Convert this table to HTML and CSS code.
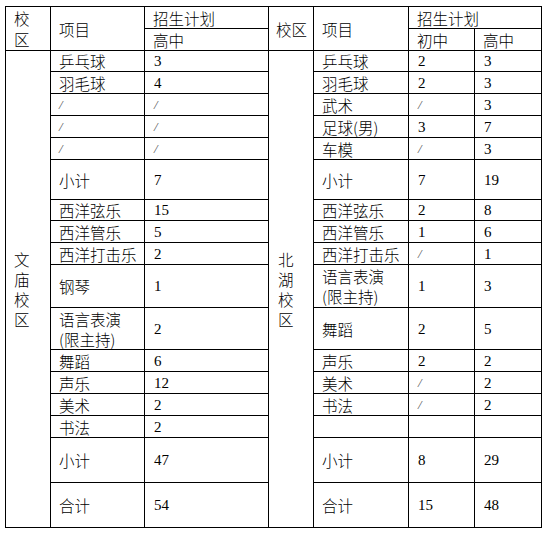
FILE: index.html
```html
<!DOCTYPE html>
<html lang="zh-CN">
<head>
<meta charset="utf-8">
<title>招生计划</title>
<link rel="stylesheet" href="styles.css">
</head>
<body>
<table class="plan">
  <colgroup>
    <col class="c-campus">
    <col class="c-item">
    <col class="c-num-wide">
    <col class="c-campus2">
    <col class="c-item2">
    <col class="c-num">
    <col class="c-num-last">
  </colgroup>
  <tr class="h22">
    <td rowspan="2" class="campus-head">校<br>区</td>
    <td rowspan="2">项目</td>
    <td>招生计划</td>
    <td rowspan="2" class="campus-head2">校区</td>
    <td rowspan="2">项目</td>
    <td colspan="2">招生计划</td>
  </tr>
  <tr class="h22">
    <td>高中</td>
    <td>初中</td>
    <td>高中</td>
  </tr>
  <tr class="h21">
    <td rowspan="17" class="campus"><span>文</span><span>庙</span><span>校</span><span>区</span></td>
    <td>乒乓球</td><td class="n">3</td>
    <td rowspan="17" class="campus2"><span>北</span><span>湖</span><span>校</span><span>区</span></td>
    <td>乒乓球</td><td class="n">2</td><td class="n">3</td>
  </tr>
  <tr class="h22"><td>羽毛球</td><td class="n">4</td><td>羽毛球</td><td class="n">2</td><td class="n">3</td></tr>
  <tr class="h22"><td class="s">/</td><td class="n s">/</td><td>武术</td><td class="n s">/</td><td class="n">3</td></tr>
  <tr class="h22"><td class="s">/</td><td class="n s">/</td><td>足球(男)</td><td class="n">3</td><td class="n">7</td></tr>
  <tr class="h22"><td class="s">/</td><td class="n s">/</td><td>车模</td><td class="n s">/</td><td class="n">3</td></tr>
  <tr class="h40"><td>小计</td><td class="n">7</td><td>小计</td><td class="n">7</td><td class="n">19</td></tr>
  <tr class="h21"><td>西洋弦乐</td><td class="n">15</td><td>西洋弦乐</td><td class="n">2</td><td class="n">8</td></tr>
  <tr class="h22"><td>西洋管乐</td><td class="n">5</td><td>西洋管乐</td><td class="n">1</td><td class="n">6</td></tr>
  <tr class="h22"><td>西洋打击乐</td><td class="n">2</td><td>西洋打击乐</td><td class="n s">/</td><td class="n">1</td></tr>
  <tr class="h43"><td>钢琴</td><td class="n">1</td><td class="two">语言表演<br>(限主持)</td><td class="n">1</td><td class="n">3</td></tr>
  <tr class="h42"><td class="two">语言表演<br>(限主持)</td><td class="n">2</td><td>舞蹈</td><td class="n">2</td><td class="n">5</td></tr>
  <tr class="h22"><td>舞蹈</td><td class="n">6</td><td>声乐</td><td class="n">2</td><td class="n">2</td></tr>
  <tr class="h22"><td>声乐</td><td class="n">12</td><td>美术</td><td class="n s">/</td><td class="n">2</td></tr>
  <tr class="h22"><td>美术</td><td class="n">2</td><td>书法</td><td class="n s">/</td><td class="n">2</td></tr>
  <tr class="h22"><td>书法</td><td class="n">2</td><td></td><td></td><td></td></tr>
  <tr class="h45"><td>小计</td><td class="n">47</td><td>小计</td><td class="n">8</td><td class="n">29</td></tr>
  <tr class="h45"><td>合计</td><td class="n">54</td><td>合计</td><td class="n">15</td><td class="n">48</td></tr>
</table>
</body>
</html>
```
FILE: styles.css
```css
html, body {
  margin: 0;
  padding: 0;
  background: #ffffff;
}

body {
  font-family: "Liberation Serif", "Noto Sans CJK SC", serif;
  color: #000000;
}

.plan {
  margin: 6px 0 0 5px;
  border-collapse: collapse;
  table-layout: fixed;
  width: 536px;
}

.c-campus { width: 45px; }
.c-item { width: 94px; }
.c-num-wide { width: 124px; }
.c-campus2 { width: 45px; }
.c-item2 { width: 95px; }
.c-num { width: 66px; }
.c-num-last { width: 67px; }

.plan td {
  border: 1px solid #000000;
  padding: 0 0 0 8px;
  vertical-align: middle;
  font-family: "Noto Sans CJK SC", "Liberation Serif", sans-serif;
  font-weight: 300;
  font-size: 15.5px;
  line-height: 20px;
  white-space: nowrap;
  overflow: hidden;
}

.plan td.n {
  font-family: "Liberation Serif", "Noto Sans CJK SC", serif;
  font-weight: 400;
  font-size: 15px;
  padding-left: 9px;
}

.plan td.s {
  font-family: "Liberation Serif", serif;
  font-style: italic;
  color: #555555;
  font-size: 13px;
}

.plan td.two {
  line-height: 20px;
}

.plan td.campus-head {
  line-height: 21px;
}

.plan td.campus-head2 {
  padding-left: 7px;
}

.plan td.campus,
.plan td.campus2 {
  line-height: 20px;
}

.campus span,
.campus2 span {
  display: block;
}

.plan td.campus2 {
  padding-left: 9px;
}

.h21 { height: 21px; }
.h22 { height: 22px; }
.h40 { height: 40px; }
.h42 { height: 42px; }
.h43 { height: 43px; }
.h45 { height: 45px; }
```
